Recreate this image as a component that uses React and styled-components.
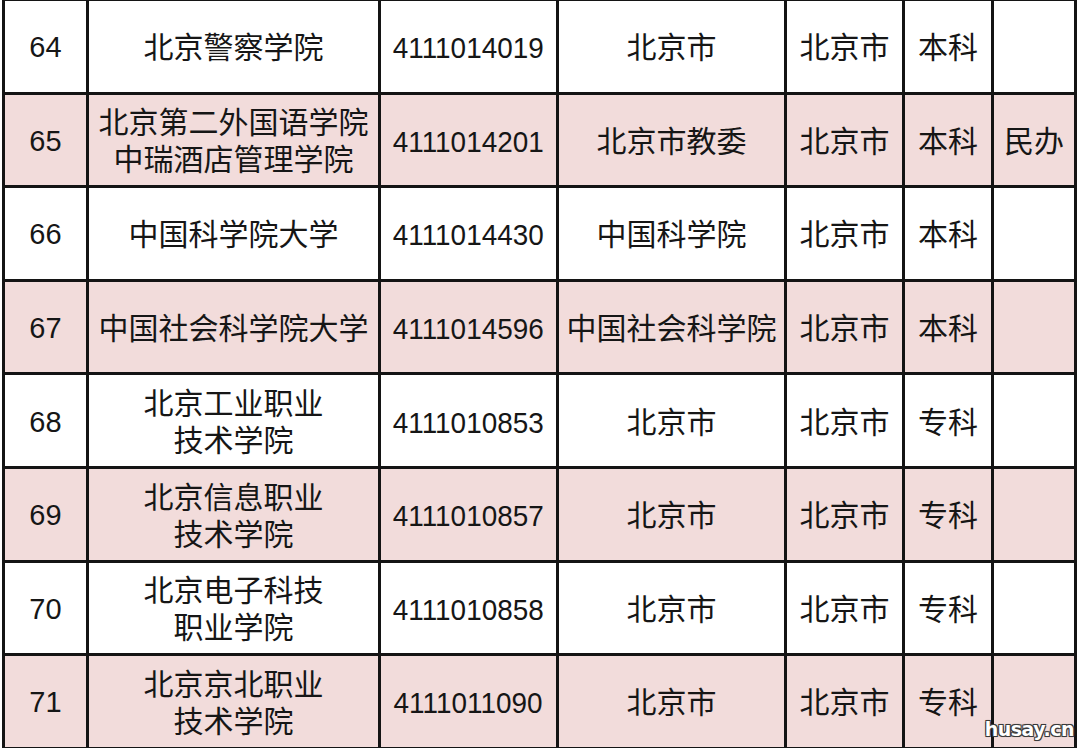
import React from 'react';
import styled, { createGlobalStyle } from 'styled-components';

const GlobalStyle = createGlobalStyle`
  html, body {
    margin: 0;
    padding: 0;
    background: #ffffff;
  }
  body {
    width: 1080px;
    height: 748px;
    overflow: hidden;
    font-family: "Liberation Sans", "Noto Sans CJK SC", sans-serif;
  }
`;

const rows = [
  { no: 64, name: ['北京警察学院'], code: '4111014019', dept: '北京市', city: '北京市', level: '本科', note: '' },
  { no: 65, name: ['北京第二外国语学院', '中瑞酒店管理学院'], code: '4111014201', dept: '北京市教委', city: '北京市', level: '本科', note: '民办' },
  { no: 66, name: ['中国科学院大学'], code: '4111014430', dept: '中国科学院', city: '北京市', level: '本科', note: '' },
  { no: 67, name: ['中国社会科学院大学'], code: '4111014596', dept: '中国社会科学院', city: '北京市', level: '本科', note: '' },
  { no: 68, name: ['北京工业职业', '技术学院'], code: '4111010853', dept: '北京市', city: '北京市', level: '专科', note: '' },
  { no: 69, name: ['北京信息职业', '技术学院'], code: '4111010857', dept: '北京市', city: '北京市', level: '专科', note: '' },
  { no: 70, name: ['北京电子科技', '职业学院'], code: '4111010858', dept: '北京市', city: '北京市', level: '专科', note: '' },
  { no: 71, name: ['北京京北职业', '技术学院'], code: '4111011090', dept: '北京市', city: '北京市', level: '专科', note: '' },
];

const colWidths = [84, 292, 178, 228, 118, 89, 83];

const Page = styled.div`
  position: relative;
  width: 1080px;
  height: 748px;
  overflow: hidden;
`;

const Table = styled.table`
  border-collapse: collapse;
  table-layout: fixed;
  width: 1072px;
  margin: -2px 0 0 2px;
`;

const Row = styled.tr`
  height: 93.6px;
  background: ${(p) => (p.$shaded ? '#f2dcdb' : '#ffffff')};
`;

const Cell = styled.td`
  border: 3px solid #141414;
  padding: 3px 0 0;
  text-align: center;
  vertical-align: middle;
  color: #161616;
  font-size: ${(p) => (p.$num ? '29px' : '30px')};
  line-height: 37px;
  white-space: nowrap;
  overflow: hidden;
`;

const Line = styled.div`
  display: block;
`;

/* the codes are set a little narrower than the rest */
const Code = styled.span`
  display: inline-block;
  font-size: 30px;
  margin: 0 -6px;
  transform: scaleX(0.93);
`;

const Watermark = styled.div`
  position: absolute;
  right: 6px;
  bottom: 8px;
  font-family: "DejaVu Sans", sans-serif;
  font-weight: bold;
  font-size: 19px;
  letter-spacing: -0.5px;
  color: #ffffff;
  text-shadow:
    -1px -1px 0 #3a3a3a, 1px -1px 0 #3a3a3a,
    -1px 1px 0 #3a3a3a, 1px 1px 0 #3a3a3a,
    0 0 2px #222;
`;

export default function App() {
  return (
    <Page>
      <GlobalStyle />
      <Table>
        <colgroup>
          {colWidths.map((w, i) => (
            <col key={i} style={{ width: w }} />
          ))}
        </colgroup>
        <tbody>
          {rows.map((r, i) => (
            <Row key={r.no} $shaded={i % 2 === 1}>
              <Cell $num>{r.no}</Cell>
              <Cell>
                {r.name.map((l) => (
                  <Line key={l}>{l}</Line>
                ))}
              </Cell>
              <Cell>
                <Code>{r.code}</Code>
              </Cell>
              <Cell>{r.dept}</Cell>
              <Cell>{r.city}</Cell>
              <Cell>{r.level}</Cell>
              <Cell>{r.note}</Cell>
            </Row>
          ))}
        </tbody>
      </Table>
      <Watermark>husay.cn</Watermark>
    </Page>
  );
}
